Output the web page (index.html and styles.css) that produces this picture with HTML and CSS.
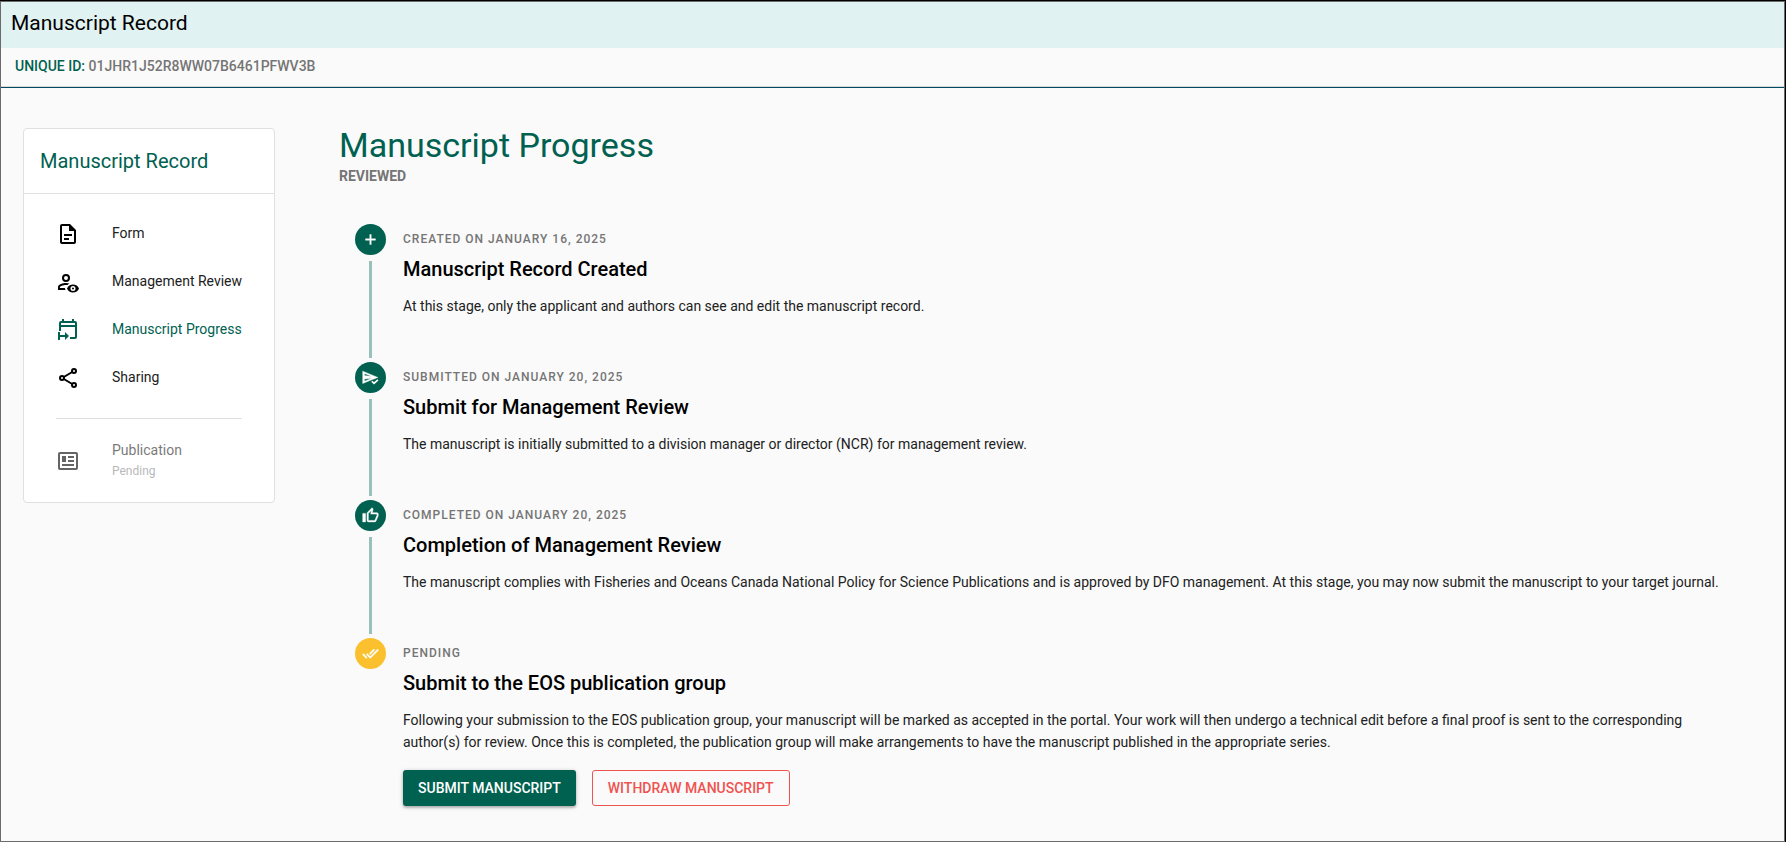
FILE: index.html
```html
<!DOCTYPE html>
<html lang="en">
<head>
<meta charset="utf-8">
<title>Manuscript Record</title>
<link rel="stylesheet" href="styles.css">
</head>
<body>
<div class="app">
  <header class="page-header">
    <div class="page-title">Manuscript Record</div>
    <div class="id-bar"><span class="id-label">UNIQUE ID:</span> 01JHR1J52R8WW07B6461PFWV3B</div>
  </header>
  <div class="layout">
    <nav class="card" aria-label="Manuscript Record">
      <h2 class="card-title">Manuscript Record</h2>
      <div class="menu">
        <a class="item" href="#form">
          <svg class="icon" viewBox="0 0 24 24"><path d="M6,2A2,2 0 0,0 4,4V20A2,2 0 0,0 6,22H18A2,2 0 0,0 20,20V8L14,2H6M6,4H13V9H18V20H6V4M8,12V14H16V12H8M8,16V18H13V16H8Z"/></svg>
          <span class="label">Form</span>
        </a>
        <a class="item" href="#review">
          <svg class="icon" viewBox="0 0 24 24"><path d="M10 4A4 4 0 0 0 10 12A4 4 0 0 0 10 4M10 6A2 2 0 0 1 10 10A2 2 0 0 1 10 6M10 13C7.33 13 2 14.33 2 17V20H9.5C9.2 19.4 9 18.8 8.9 18.1H3.9V17C3.9 16.36 7 14.9 10 14.9C10.5 14.9 11 15 11.5 15.1C12 14.5 12.7 13.9 13.4 13.5C12.2 13.2 11 13 10 13M17 14.5C14.3 14.5 12 16.1 11 18.5C12 20.9 14.3 22.5 17 22.5S22 20.9 23 18.5C22 16.1 19.7 14.5 17 14.5M17 16A2.5 2.5 0 0 1 17 21A2.5 2.5 0 0 1 17 16M17 17.5A1 1 0 0 0 17 19.5A1 1 0 0 0 17 17.5Z"/></svg>
          <span class="label">Management Review</span>
        </a>
        <a class="item active" href="#progress" aria-current="page">
          <svg class="icon" viewBox="0 0 24 24"><path d="M6 1V3H5A2 2 0 0 0 3 5V13H5V9H19V19H14V21H19A2 2 0 0 0 21 19V5A2 2 0 0 0 19 3H18V1H16V3H8V1H6M5 5H19V7H5V5M2 14V22H4V19H9V22L13 18L9 14V17H4V14H2Z"/></svg>
          <span class="label">Manuscript Progress</span>
        </a>
        <a class="item" href="#sharing">
          <svg class="icon" viewBox="0 0 24 24"><g class="stroked"><circle cx="18" cy="5" r="2"/><circle cx="6" cy="12" r="2"/><circle cx="18" cy="19" r="2"/><path d="M7.8 11L16.2 6M7.8 13L16.2 18"/></g></svg>
          <span class="label">Sharing</span>
        </a>
        <hr class="divider">
        <div class="item disabled">
          <svg class="icon" viewBox="0 0 24 24"><path d="M20 5V19H4V5H20M20 3H4C2.89 3 2 3.89 2 5V19C2 20.11 2.89 21 4 21H20C21.11 21 22 20.11 22 19V5C22 3.89 21.11 3 20 3M18 15H6V17H18V15M10 7H6V13H10V7M12 9H18V7H12V9M18 11H12V13H18V11Z"/></svg>
          <span>Publication<small class="caption">Pending</small></span>
        </div>
      </div>
    </nav>
    <main class="content">
      <h1 class="heading">Manuscript Progress</h1>
      <div class="status">REVIEWED</div>
      <ol class="timeline">
        <li class="entry">
          <div class="rail"><span class="dot"><svg class="dot-icon" viewBox="0 0 24 24"><path d="M19,13H13V19H11V13H5V11H11V5H13V11H19V13Z"/></svg></span></div>
          <div class="body">
            <div class="subtitle">CREATED ON JANUARY 16, 2025</div>
            <h3 class="entry-title">Manuscript Record Created</h3>
            <p class="text">At this stage, only the applicant and authors can see and edit the manuscript record.</p>
          </div>
        </li>
        <li class="entry">
          <div class="rail"><span class="dot"><svg class="dot-icon" viewBox="0 0 24 24"><path d="M1 3V20.5L13 15.5L22.5 12L1 3M3.5 6.3L14 10.7L3.5 9.3V6.3M3.5 14.2L14 12.9L3.5 17.4V14.2Z"/><path class="check-gap" d="M13.5 17L17 20L22.5 14.8"/><path class="check" d="M13.8 17.3L17 20.3L22.5 15.2"/></svg></span></div>
          <div class="body">
            <div class="subtitle">SUBMITTED ON JANUARY 20, 2025</div>
            <h3 class="entry-title">Submit for Management Review</h3>
            <p class="text">The manuscript is initially submitted to a division manager or director (NCR) for management review.</p>
          </div>
        </li>
        <li class="entry">
          <div class="rail"><span class="dot"><svg class="dot-icon" viewBox="0 0 24 24"><path d="M5,9V21H1V9H5M9,21A2,2 0 0,1 7,19V9C7,8.45 7.22,7.95 7.59,7.59L14.17,1L15.23,2.06C15.5,2.33 15.67,2.7 15.67,3.11L15.64,3.43L14.69,8H21C22.11,8 23,8.9 23,10V12C23,12.26 22.95,12.5 22.86,12.73L19.84,19.78C19.54,20.5 18.83,21 18,21H9M9,19H18.03L21,12V10H12.21L13.34,4.68L9,9.03V19Z"/></svg></span></div>
          <div class="body">
            <div class="subtitle">COMPLETED ON JANUARY 20, 2025</div>
            <h3 class="entry-title">Completion of Management Review</h3>
            <p class="text">The manuscript complies with Fisheries and Oceans Canada National Policy for Science Publications and is approved by DFO management. At this stage, you may now submit the manuscript to your target journal.</p>
          </div>
        </li>
        <li class="entry pending">
          <div class="rail"><span class="dot"><svg class="dot-icon" viewBox="0 0 24 24"><path d="M0.41,13.41L6,19L7.41,17.58L1.83,12M22.24,5.58L11.66,16.17L7.5,12L6.07,13.41L11.66,19L23.66,7M18,7L16.59,5.58L10.24,11.93L11.66,13.34L18,7Z"/></svg></span></div>
          <div class="body">
            <div class="subtitle">PENDING</div>
            <h3 class="entry-title">Submit to the EOS publication group</h3>
            <p class="text">Following your submission to the EOS publication group, your manuscript will be marked as accepted in the portal. Your work will then undergo a technical edit before a final proof is sent to the corresponding author(s) for review. Once this is completed, the publication group will make arrangements to have the manuscript published in the appropriate series.</p>
            <div class="actions">
              <button class="btn primary" type="button">SUBMIT MANUSCRIPT</button>
              <button class="btn outline" type="button">WITHDRAW MANUSCRIPT</button>
            </div>
          </div>
        </li>
      </ol>
    </main>
  </div>
</div>
</body>
</html>
```
FILE: styles.css
```css
:root {
  --primary: #006150;
  --muted: #757575;
}
* { box-sizing: border-box; }
body {
  margin: 0;
  background: #fafafa;
  color: #000;
  font: 400 14px/22px Roboto, sans-serif;
  border-top: 1px solid #000;
  border-right: 1px solid #000;
}
h1, h2, h3, p, ol { margin: 0; padding: 0; }
.app {
  min-height: calc(100vh - 1px);
  border: 1px solid #6b6b6b;
}
.page-title {
  background: #e0f2f1;
  padding: 5px 10px 9px;
  font-size: 21px;
  line-height: 32px;
}
.id-bar {
  padding: 7px 14px 9px;
  font-weight: 500;
  color: var(--muted);
  border-bottom: 1px solid #d8d8d8;
}
.id-label { color: var(--primary); }
.page-header { border-bottom: 1px solid #004a62; }
.layout {
  display: grid;
  grid-template-columns: 252px 1fr;
  column-gap: 64px;
  align-items: start;
  padding: 40px 48px 24px 22px;
}
.card {
  background: #fff;
  border: 1px solid #e0e0e0;
  border-radius: 4px;
}
.card-title {
  padding: 16px;
  color: var(--primary);
  font-size: 20px;
  font-weight: 400;
  line-height: 32px;
  border-bottom: 1px solid #e0e0e0;
}
.menu { padding: 16px 16px 15px; }
.item {
  display: flex;
  align-items: center;
  gap: 32px;
  min-height: 48px;
  padding: 0 16px;
  color: #212121;
  line-height: 20px;
  text-decoration: none;
  white-space: nowrap;
}
.label { padding-bottom: 2px; }
.icon {
  flex: none;
  width: 24px;
  height: 24px;
  fill: currentColor;
}
.item:not(.active) .icon { color: #000; }
.item.active { color: var(--primary); }
.item.disabled {
  min-height: 52px;
  opacity: 0.6;
}
.stroked {
  fill: none;
  stroke: currentColor;
  stroke-width: 2;
}
.caption {
  display: block;
  color: #8a8a8a;
  font-size: 12px;
  line-height: 22px;
}
.divider {
  height: 1px;
  margin: 16px;
  border: 0;
  background: #e0e0e0;
}
.heading {
  color: var(--primary);
  font-size: 34px;
  font-weight: 400;
  line-height: 34px;
}
.status {
  padding-top: 3px;
  color: var(--muted);
  font-weight: 700;
}
.timeline {
  list-style: none;
  padding: 37px 0 0 16px;
}
.entry {
  display: grid;
  grid-template-columns: 31px 1fr;
  column-gap: 17px;
  min-height: 138px;
}
.rail {
  display: flex;
  flex-direction: column;
  align-items: center;
}
.rail::after {
  content: "";
  flex: 1;
  width: 3px;
  margin: 6px 0 4px;
  background: #99c0b9;
}
.dot {
  display: grid;
  place-items: center;
  width: 31px;
  height: 31px;
  border-radius: 50%;
  background: var(--primary);
}
.dot-icon {
  width: 17px;
  height: 17px;
  fill: #fff;
  stroke: #fff;
  stroke-width: 0.6;
}
.check-gap {
  fill: none;
  stroke: var(--primary);
  stroke-width: 5;
}
.check {
  fill: none;
  stroke-width: 2.4;
}
.pending .dot { background: #fbc02d; }
.pending .rail::after { display: none; }
.subtitle {
  padding-top: 4px;
  color: var(--muted);
  font-size: 12px;
  font-weight: 500;
  letter-spacing: 1px;
}
.entry-title {
  padding-top: 3px;
  font-size: 20px;
  font-weight: 500;
  line-height: 32px;
}
.text {
  padding-top: 10px;
  color: #212121;
}
.actions {
  display: flex;
  gap: 16px;
  padding-top: 17px;
}
.btn {
  height: 36px;
  padding: 0 15px;
  border: 0;
  border-radius: 3px;
  font: 500 14px/20px Roboto, sans-serif;
}
.primary {
  background: var(--primary);
  color: #fff;
  box-shadow: 0 1px 4px rgba(0, 0, 0, 0.25), 0 2px 2px rgba(0, 0, 0, 0.15);
}
.outline {
  background: transparent;
  border: 1px solid #ef5350;
  color: #ef5350;
}
```
